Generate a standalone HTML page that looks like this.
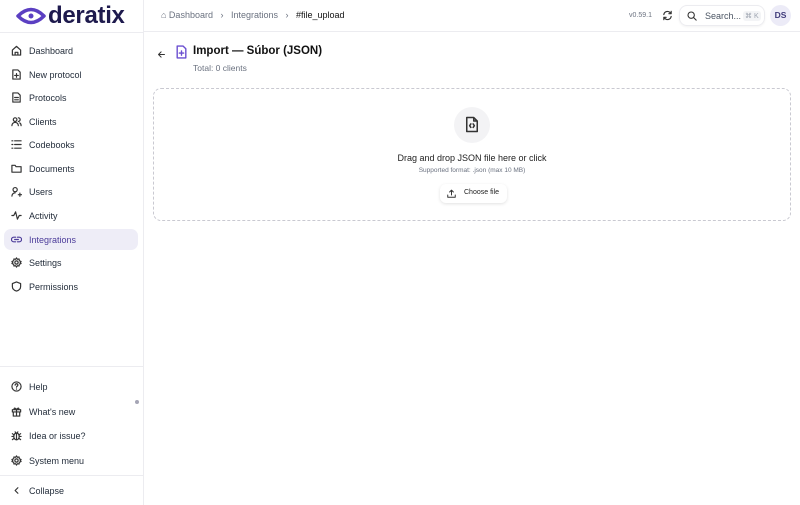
<!DOCTYPE html>
<html><head><meta charset="utf-8"><style>
*{box-sizing:border-box;margin:0;padding:0}
body{width:800px;height:505px;background:#fff;font-family:"Liberation Sans",sans-serif;color:#1f2937;position:relative;overflow:hidden}
.side{position:absolute;left:0;top:0;width:144px;height:505px;border-right:1px solid #ececf0}
.hdr{position:absolute;left:144px;top:0;right:0;height:32px;border-bottom:1px solid #ececf0}
.logo{position:absolute;left:16px;top:3px;height:26px;display:flex;align-items:center}
.logo span{font-size:24px;font-weight:bold;color:#1e1a4d;letter-spacing:-0.3px;margin-left:2px}
.nav{position:absolute;left:4px;width:134px;height:21px;display:flex;align-items:center;font-size:9px;color:#1f2937}
.nav svg{position:absolute;left:7px;width:11px;height:11px}
.nav b{font-weight:normal;position:absolute;left:25px}
.act{background:#eeedf7;border-radius:7px}
.act b{color:#4c3c9a}
svg{fill:none;stroke:#333;stroke-width:1.3;stroke-linecap:round;stroke-linejoin:round}
</style></head><body>
<div class="side">
<div class="logo"><svg width="30" height="22" viewBox="0 0 30 22" style="stroke:#5b3fc2;stroke-width:3.5"><path d="M2 11 Q15 -2 28 11 Q15 24 2 11Z"/><circle cx="15" cy="11" r="2.5" fill="#5b3fc2" stroke="none"/></svg><span>deratix</span></div>
<div style="position:absolute;left:0;right:0;top:32px;border-top:1px solid #ececf0"></div>
<div class="nav" style="top:40px"><svg viewBox="0 0 12 12"><path d="M1.5 5.5L6 1.5l4.5 4V11h-9z M4.5 11V8h3v3"/></svg><b>Dashboard</b></div>
<div class="nav" style="top:64px"><svg viewBox="0 0 12 12"><path d="M2 1h5.5L10 3.5V11H2z M6 5v4 M4 7h4"/></svg><b>New protocol</b></div>
<div class="nav" style="top:87px"><svg viewBox="0 0 12 12"><path d="M2 1h5.5L10 3.5V11H2z M4 6h4 M4 8.5h4"/></svg><b>Protocols</b></div>
<div class="nav" style="top:111px"><svg viewBox="0 0 12 12"><circle cx="4.5" cy="4" r="2"/><path d="M1 10.5c0-2 1.5-3.5 3.5-3.5S8 8.5 8 10.5 M8 2a2 2 0 010 4 M9.5 7.5c1 .5 1.5 1.5 1.5 3"/></svg><b>Clients</b></div>
<div class="nav" style="top:134px"><svg viewBox="0 0 12 12"><path d="M1 2h1 M1 6h1 M1 10h1 M4 2h7 M4 6h7 M4 10h7"/></svg><b>Codebooks</b></div>
<div class="nav" style="top:158px"><svg viewBox="0 0 12 12"><path d="M1 2.5h3.5l1 1.5H11v6H1z"/></svg><b>Documents</b></div>
<div class="nav" style="top:181px"><svg viewBox="0 0 12 12"><circle cx="4.5" cy="4" r="2.3"/><path d="M1 11c0-2 1.5-3.5 3.5-3.5 M8 9.5h3.5 M9.7 7.8v3.4"/></svg><b>Users</b></div>
<div class="nav" style="top:205px"><svg viewBox="0 0 12 12"><path d="M1 6h2l2-4 2 8 2-4h2"/></svg><b>Activity</b></div>
<div class="nav act" style="top:229px"><svg viewBox="0 0 12 12" style="stroke:#4c3c9a"><path d="M5 3.5H3a2.5 2.5 0 000 5h2 M7 3.5h2a2.5 2.5 0 010 5H7 M4 6h4"/></svg><b>Integrations</b></div>
<div class="nav" style="top:252px"><svg viewBox="0 0 12 12"><circle cx="6" cy="6" r="1.8"/><path d="M6 1l1 1.5 1.8-.3.3 1.8L11 5l-1 1 1 1-1.9 1-.3 1.8L7 9.5 6 11 5 9.5l-1.8.3L2.9 8 1 7l1-1-1-1 1.9-1 .3-1.8L5 2.5z"/></svg><b>Settings</b></div>
<div class="nav" style="top:276px"><svg viewBox="0 0 12 12"><path d="M6 1l4.5 1.8V6c0 2.7-2 4.3-4.5 5-2.5-.7-4.5-2.3-4.5-5V2.8z"/></svg><b>Permissions</b></div>
<div style="position:absolute;left:0;right:0;top:366px;border-top:1px solid #ececf0"></div>
<div class="nav" style="top:376px"><svg viewBox="0 0 12 12"><circle cx="6" cy="6" r="5"/><path d="M4.5 4.5a1.5 1.5 0 113 0c0 1-1.5 1.2-1.5 2.2 M6 8.7v.1"/></svg><b>Help</b></div>
<div class="nav" style="top:401px"><svg viewBox="0 0 12 12"><path d="M1.5 4h9v2.5h-9z M2.5 6.5V11h7V6.5 M6 4v7 M6 4C4 1 2.5 2.5 4 4 M6 4c2-3 3.5-1.5 2 0"/></svg><b>What's new</b></div>
<div style="position:absolute;left:135px;top:400px;width:4px;height:4px;border-radius:2px;background:#a5a5b5"></div>
<div class="nav" style="top:425px"><svg viewBox="0 0 12 12"><ellipse cx="6" cy="7" rx="3" ry="3.7"/><path d="M6 3.5v7 M1 7h2 M9 7h2 M1.5 4l2 1.5 M10.5 4l-2 1.5 M1.5 10.5l2-1.5 M10.5 10.5l-2-1.5 M4.5 2l1 1.5 M7.5 2l-1 1.5"/></svg><b>Idea or issue?</b></div>
<div class="nav" style="top:450px"><svg viewBox="0 0 12 12"><circle cx="6" cy="6" r="1.8"/><path d="M6 1l1 1.5 1.8-.3.3 1.8L11 5l-1 1 1 1-1.9 1-.3 1.8L7 9.5 6 11 5 9.5l-1.8.3L2.9 8 1 7l1-1-1-1 1.9-1 .3-1.8L5 2.5z"/></svg><b>System menu</b></div>
<div style="position:absolute;left:0;right:0;top:475px;border-top:1px solid #ececf0"></div>
<div class="nav" style="top:480px"><svg viewBox="0 0 12 12"><path d="M7.5 3L4.5 6l3 3"/></svg><b>Collapse</b></div>
</div>
<div class="hdr">
<div style="position:absolute;left:17px;top:10px;font-size:9px;color:#6b7280;white-space:nowrap">⌂ Dashboard &nbsp;&nbsp;›&nbsp;&nbsp; Integrations &nbsp;&nbsp;›&nbsp;&nbsp; <span style="color:#111">#file_upload</span></div>
<div style="position:absolute;left:485px;top:12px;font-size:7px;color:#6b7280">v0.59.1</div>
<svg style="position:absolute;left:518px;top:10px" width="11" height="11" viewBox="0 0 12 12"><path d="M2 5a4 4 0 017-2l1 1 M10 7a4 4 0 01-7 2L2 8 M10 1.5V4H7.5 M2 10.5V8h2.5"/></svg>
<div style="position:absolute;left:535px;top:5px;width:86px;height:21px;border:1px solid #ececf0;border-radius:8px;box-shadow:0 1px 2px rgba(0,0,0,.05)">
<svg style="position:absolute;left:7px;top:5px" width="10" height="10" viewBox="0 0 12 12"><circle cx="5" cy="5" r="3.8"/><path d="M8 8l3 3"/></svg>
<span style="position:absolute;left:25px;top:5px;font-size:9px;color:#4b5563">Search...</span>
<span style="position:absolute;left:63px;top:5px;font-size:7px;color:#9ca3af;background:#f3f4f6;padding:1px 2px;border-radius:3px">⌘ K</span></div>
<div style="position:absolute;left:626px;top:5px;width:21px;height:21px;border-radius:11px;background:#ecebf7;color:#3f3a7a;font-size:8.5px;font-weight:bold;text-align:center;line-height:21px">DS</div>
</div>
<svg style="position:absolute;left:157px;top:50px" width="9" height="9" viewBox="0 0 12 12"><path d="M10 6H2 M5.5 2.5L2 6l3.5 3.5"/></svg>
<svg style="position:absolute;left:175px;top:45px" width="13" height="14" viewBox="0 0 12 13" ><path style="stroke:#6b4fd0" d="M2 1h5.5L10 3.5V12H2z M6 5.5v4 M4 7.5h4"/></svg>
<div style="position:absolute;left:193px;top:45px;font-size:11.5px;font-weight:bold;color:#111">Import — Súbor (JSON)</div>
<div style="position:absolute;left:193px;top:63px;font-size:8.5px;color:#6b7280">Total: 0 clients</div>
<div style="position:absolute;left:153px;top:88px;width:638px;height:133px;border:1.3px dashed #c9c9d1;border-radius:8px">
<div style="position:absolute;left:300px;top:18px;width:36px;height:36px;border-radius:18px;background:#f3f3f5"></div>
<svg style="position:absolute;left:311px;top:27px" width="14" height="17" viewBox="0 0 12 14"><path d="M1.5 1h6L10.5 4v9h-9z M7.5 1v3h3 M5 6.5L4 8l1 1.5 M7 6.5L8 8 7 9.5"/></svg>
<div style="position:absolute;left:0;right:0;top:64px;text-align:center;font-size:9px;color:#222">Drag and drop JSON file here or click</div>
<div style="position:absolute;left:0;right:0;top:78px;text-align:center;font-size:6.5px;color:#6b7280">Supported format: .json (max 10 MB)</div>
<div style="position:absolute;left:286px;top:95px;width:67px;height:19px;border-radius:6px;box-shadow:0 1px 3px rgba(0,0,0,.12);background:#fff">
<svg style="position:absolute;left:7px;top:5px" width="9" height="9" viewBox="0 0 12 12"><path d="M1 8v3h10V8 M6 8V1.5 M3.5 4L6 1.5 8.5 4"/></svg>
<span style="position:absolute;left:24px;top:5px;font-size:7px;color:#222">Choose file</span></div>
</div>
</body></html>
